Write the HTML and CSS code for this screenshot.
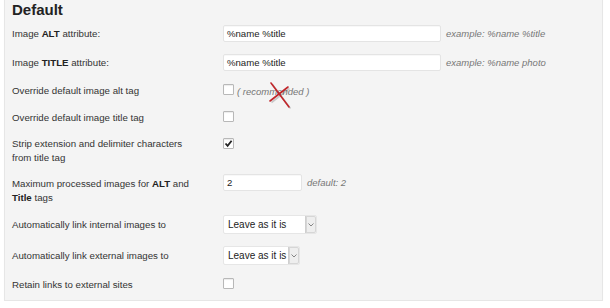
FILE: index.html
```html
<!DOCTYPE html>
<html>
<head>
<meta charset="utf-8">
<link rel="stylesheet" href="styles.css">
</head>
<body>
<div class="panel">
  <h3 class="title">Default</h3>
  <div class="row r1">
    <div class="label">Image <b>ALT</b> attribute:</div>
    <div class="field"><span class="input text">%name %title</span><span class="hint">example: %name %title</span></div>
  </div>
  <div class="row r1">
    <div class="label">Image <b>TITLE</b> attribute:</div>
    <div class="field"><span class="input text">%name %title</span><span class="hint">example: %name photo</span></div>
  </div>
  <div class="row r3">
    <div class="label">Override default image alt tag</div>
    <div class="field"><span class="check"></span><span class="hint rec">( recommended )</span>
      <svg class="xmark" width="26" height="30" viewBox="0 0 26 30">
        <path d="M3 2 L21 26" stroke="rgba(0,0,0,0.18)" stroke-width="1.6" transform="translate(1.5,1.5)"/>
        <path d="M20 6 L2 20" stroke="rgba(0,0,0,0.18)" stroke-width="1.6" transform="translate(1.5,1.5)"/>
        <path d="M3 2 L21 26" stroke="#c0262b" stroke-width="1.6" stroke-linecap="round"/>
        <path d="M20 6 L2 20" stroke="#c0262b" stroke-width="1.6" stroke-linecap="round"/>
      </svg>
    </div>
  </div>
  <div class="row r3">
    <div class="label">Override default image title tag</div>
    <div class="field"><span class="check"></span></div>
  </div>
  <div class="row r5">
    <div class="label">Strip extension and delimiter characters<br>from title tag</div>
    <div class="field top"><span class="check checked"><svg width="9" height="9" viewBox="0 0 9 9"><path d="M1.5 4.5 L3.6 6.8 L7.6 1.8" fill="none" stroke="#222" stroke-width="1.8"/></svg></span></div>
  </div>
  <div class="row r6">
    <div class="label">Maximum processed images for <b>ALT</b> and<br><b>Title</b> tags</div>
    <div class="field top"><span class="input num">2</span><span class="hint">default: 2</span></div>
  </div>
  <div class="row r7">
    <div class="label">Automatically link internal images to</div>
    <div class="field"><span class="select wide"><span class="sel-text">Leave as it is</span><span class="sel-btn"><svg width="6" height="4" viewBox="0 0 6 4"><path d="M0.5 0.5 L3 3 L5.5 0.5" fill="none" stroke="#777" stroke-width="0.9"/></svg></span></span></div>
  </div>
  <div class="row r8">
    <div class="label">Automatically link external images to</div>
    <div class="field"><span class="select"><span class="sel-text">Leave as it is</span><span class="sel-btn"><svg width="6" height="4" viewBox="0 0 6 4"><path d="M0.5 0.5 L3 3 L5.5 0.5" fill="none" stroke="#777" stroke-width="0.9"/></svg></span></span></div>
  </div>
  <div class="row r9">
    <div class="label">Retain links to external sites</div>
    <div class="field"><span class="check"></span></div>
  </div>
</div>
</body>
</html>
```

FILE: styles.css
```css
html, body {
  margin: 0;
  padding: 0;
  background: #ffffff;
}
body {
  font-family: "Liberation Sans", Arial, sans-serif;
  color: #333;
  font-size: 10px;
}
.panel {
  width: 599px;
  height: 302px;
  margin: -1px 0 0 4px;
  background: #f4f4f4;
  border: 1px solid #e6e6e6;
  box-shadow: 0 1px 1px rgba(0,0,0,0.04);
  padding: 0 0 0 7px;
  box-sizing: border-box;
}
.title {
  margin: 0;
  padding-top: 1px;
  font-size: 15px;
  line-height: 18px;
  font-weight: bold;
  color: #222;
  height: 18px;
}
.row {
  display: grid;
  grid-template-columns: 211px auto;
  align-items: center;
}
.label {
  line-height: 14px;
  font-size: 9.7px;
  color: #333;
}
.label b { color: #222; }
.field {
  display: flex;
  align-items: center;
  position: relative;
}
.field.top { align-items: flex-start; }
.r1 { padding: 6px 0; }
.r3 { padding: 7px 0 6px; }
.r5 { padding: 6px 0 6px; align-items: start; }
.r6 { padding: 6px 0 4px; align-items: start; }
.r7 { padding: 6px 0 6px; }
.r8 { padding: 6px 0 6px; }
.r9 { padding: 7px 0 6px; }
.input {
  display: block;
  box-sizing: border-box;
  height: 17px;
  line-height: 15px;
  background: #fff;
  border: 1px solid #e4e4e4;
  border-radius: 2px;
  box-shadow: inset 0 1px 1px rgba(0,0,0,0.03);
  padding: 0 3px;
  color: #222;
  font-size: 9.6px;
}
.input.text { width: 218px; }
.input.num { width: 79px; margin-top: -3px; }
.hint {
  font-style: italic;
  color: #777;
  font-size: 9.5px;
  margin-left: 5px;
}
.hint.rec { margin-left: 3px; }
.check {
  display: flex;
  align-items: center;
  justify-content: center;
  width: 11px;
  height: 11px;
  box-sizing: border-box;
  background: #fff;
  border: 1px solid #b8b8b8;
  border-radius: 1px;
  box-shadow: inset 0 1px 1px rgba(0,0,0,0.08);
  margin-top: -3px;
}
.check.checked { margin-top: 1px; }
.select {
  display: flex;
  height: 19px;
  width: 77px;
  box-sizing: border-box;
  background: #fff;
  border: 1px solid #e6e6e6;
  border-radius: 2px;
}
.select.wide { width: 94px; }
.sel-text {
  flex: 1;
  font-size: 10px;
  line-height: 17px;
  padding-left: 4px;
  color: #222;
  white-space: nowrap;
}
.sel-btn {
  width: 10px;
  display: flex;
  align-items: center;
  justify-content: center;
  background: #eeeeee;
  border-left: 1px solid #cfcfcf;
  border-radius: 0 2px 2px 0;
  box-shadow: inset 0 0 0 1px #d6d6d6;
}
.xmark {
  position: absolute;
  left: 45px;
  top: -5px;
}
```
